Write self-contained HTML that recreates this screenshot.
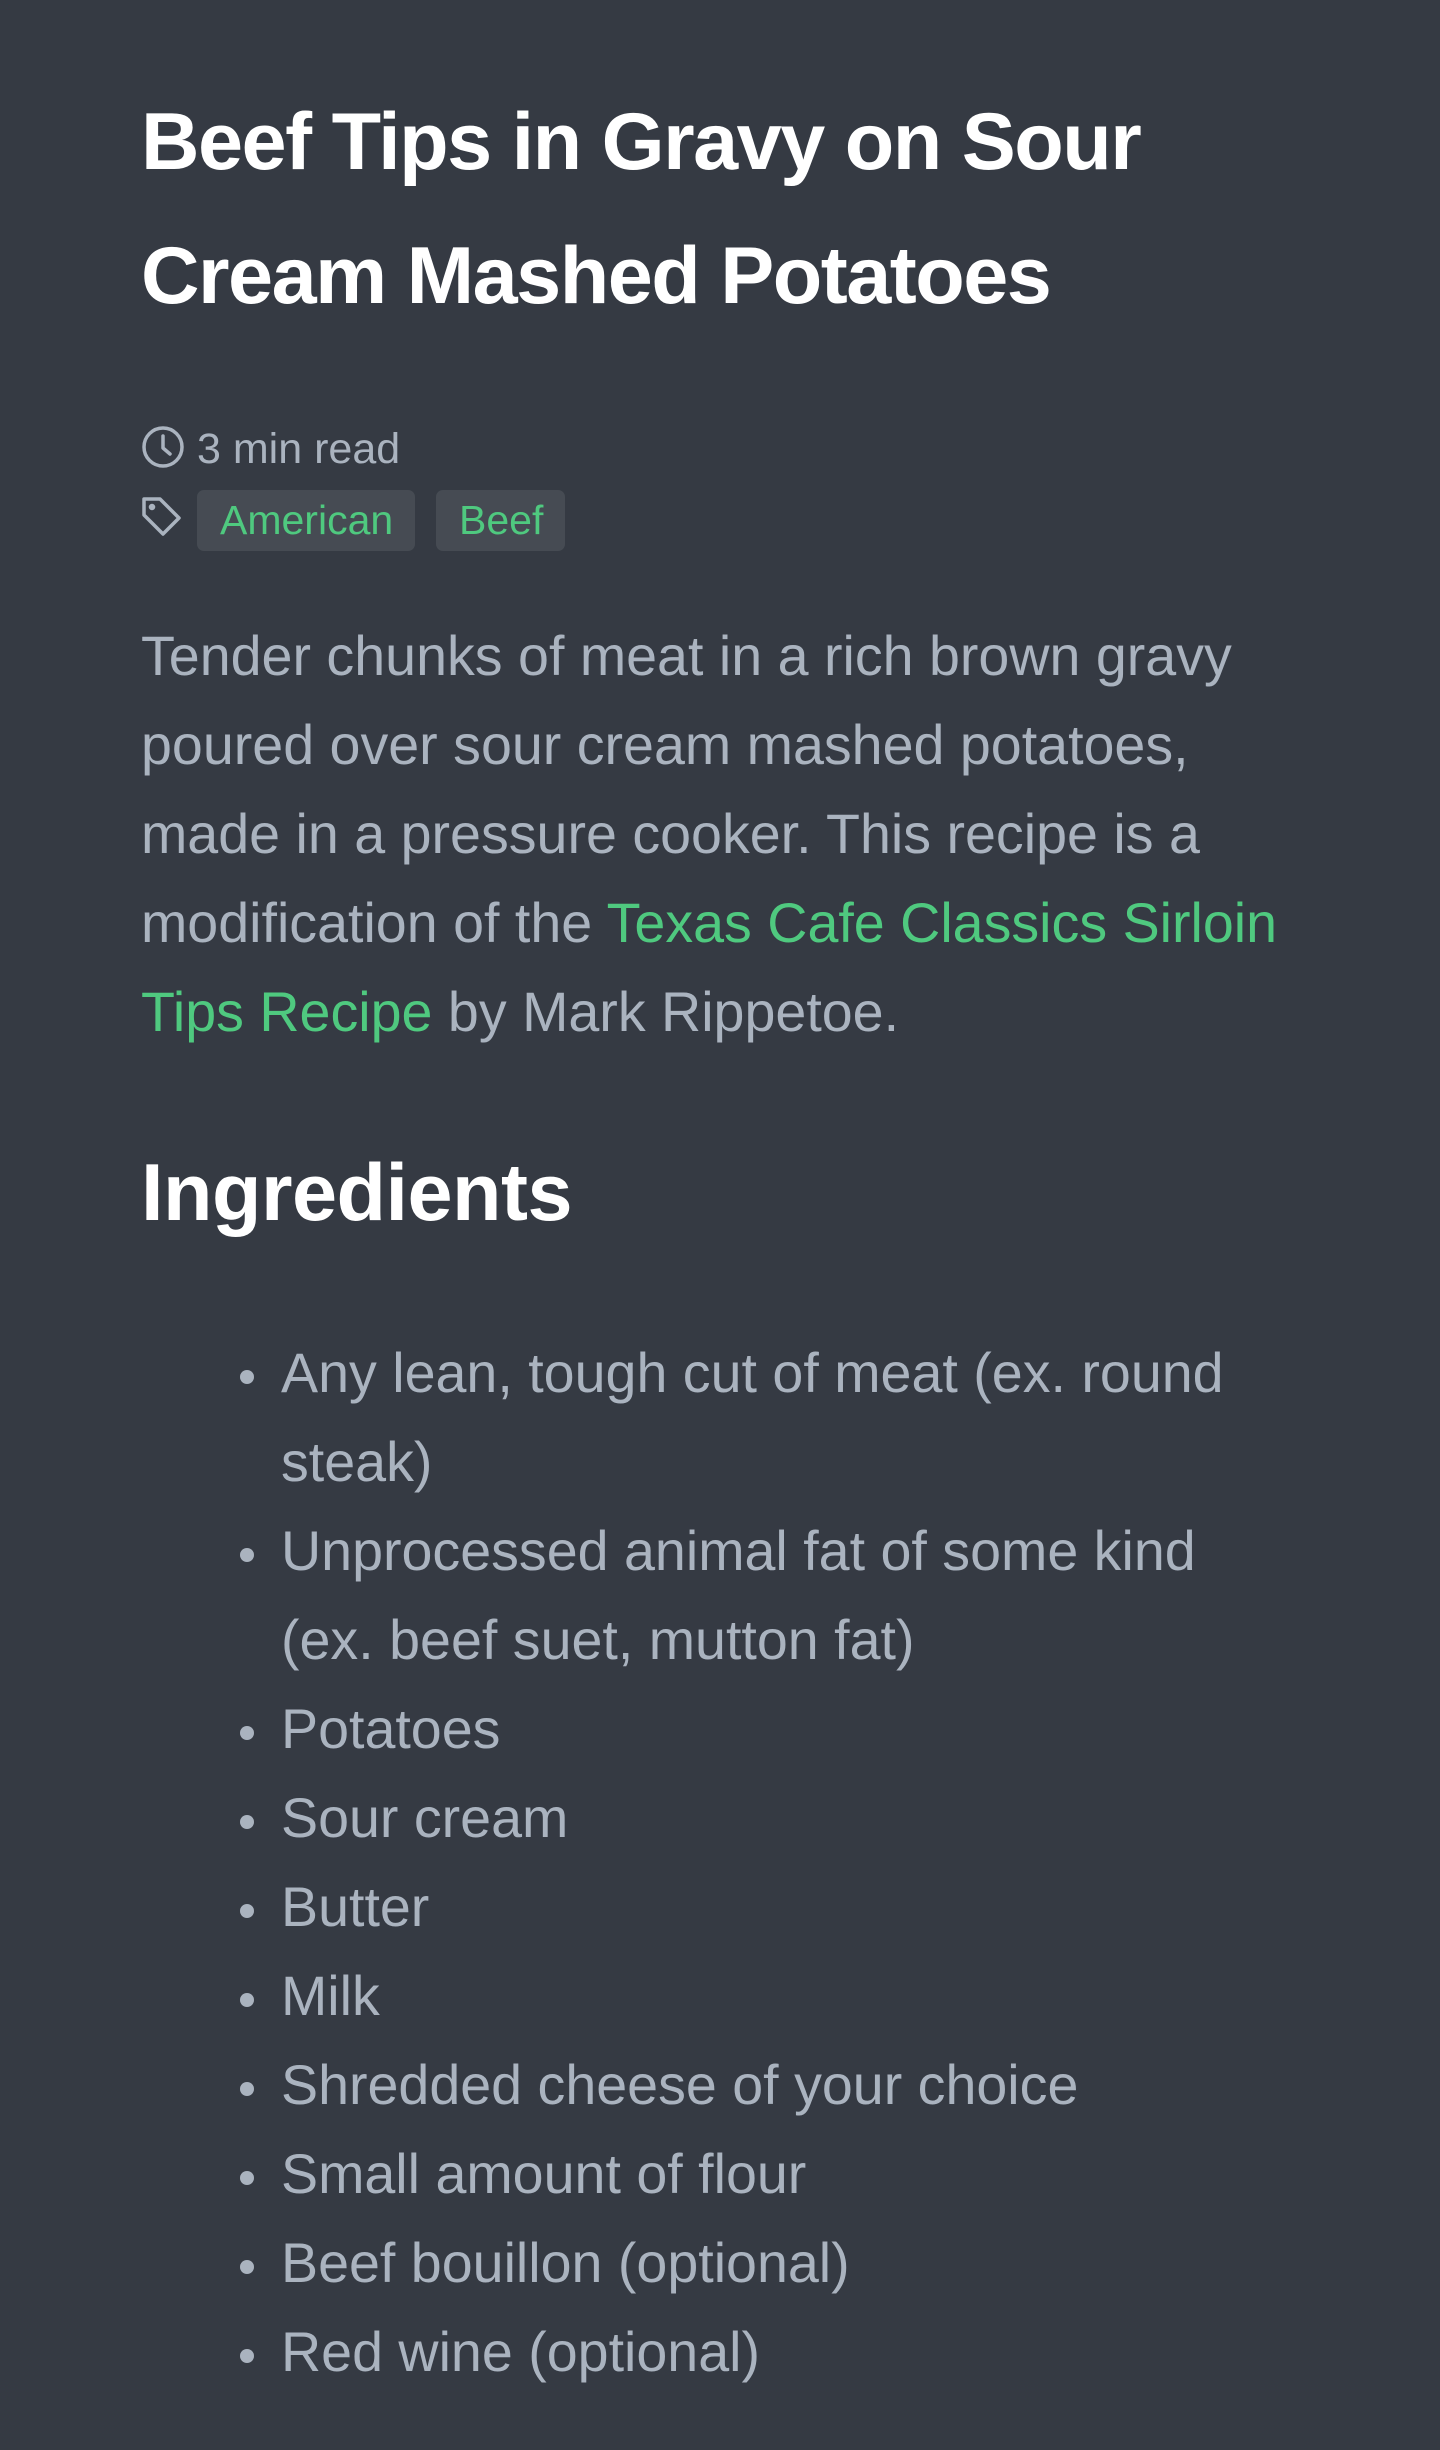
<!DOCTYPE html>
<html><head><meta charset="utf-8"><style>
html,body{margin:0;padding:0}
body{width:1440px;height:2450px;background:#353a43;position:relative;overflow:hidden;font-family:"Liberation Sans",Arial,sans-serif}
.l{position:absolute;white-space:nowrap;line-height:1}
.t{font-weight:bold;color:#fff;font-size:81px;left:141px;letter-spacing:-1.5px}
.b{font-size:55.6px;color:#aab3bf;left:141px}
.li{font-size:55.6px;color:#aab3bf;left:281px}
.g{color:#4fc97f}
.dot{position:absolute;left:240px;width:14px;height:14px;border-radius:50%;background:#aab3bf}
.tag{position:absolute;top:490px;height:61px;background:#464b53;border-radius:7px}
</style></head><body>
<div class="l t" style="top:102px">Beef Tips in Gravy on Sour</div>
<div class="l t" style="top:236px">Cream Mashed Potatoes</div>

<svg style="position:absolute;left:140px;top:424px" width="46" height="46" viewBox="0 0 46 46" fill="none" stroke="#aab3bf" stroke-width="3.5" stroke-linecap="round" stroke-linejoin="round"><circle cx="23" cy="23" r="19"/><path d="M23 12v12l7 6"/></svg>
<div class="l" style="top:428px;left:197px;font-size:43px;color:#aab3bf">3 min read</div>

<svg style="position:absolute;left:140px;top:495px" width="44" height="44" viewBox="0 0 44 44" fill="none" stroke="#aab3bf" stroke-width="3.5" stroke-linejoin="round"><path d="M4 4h16l19 19-16 16L4 20z"/><circle cx="12" cy="12" r="1.5" fill="#aab3bf"/></svg>
<div class="tag" style="left:197px;width:218px"></div>
<div class="tag" style="left:436px;width:129px"></div>
<div class="l g" style="top:500px;left:220px;font-size:41px">American</div>
<div class="l g" style="top:500px;left:459px;font-size:41px">Beef</div>

<div class="l b" style="top:629px">Tender chunks of meat in a rich brown gravy</div>
<div class="l b" style="top:718px">poured over sour cream mashed potatoes,</div>
<div class="l b" style="top:807px">made in a pressure cooker. This recipe is a</div>
<div class="l b" style="top:896px">modification of the <span class="g">Texas Cafe Classics Sirloin</span></div>
<div class="l b" style="top:985px"><span class="g">Tips Recipe</span> by Mark Rippetoe.</div>

<div class="l t" style="top:1153px;letter-spacing:-0.5px">Ingredients</div>

<div class="dot" style="top:1370px"></div><div class="l li" style="top:1346px">Any lean, tough cut of meat (ex. round</div>
<div class="l li" style="top:1435px">steak)</div>
<div class="dot" style="top:1548px"></div><div class="l li" style="top:1524px">Unprocessed animal fat of some kind</div>
<div class="l li" style="top:1613px">(ex. beef suet, mutton fat)</div>
<div class="dot" style="top:1726px"></div><div class="l li" style="top:1702px">Potatoes</div>
<div class="dot" style="top:1815px"></div><div class="l li" style="top:1791px">Sour cream</div>
<div class="dot" style="top:1904px"></div><div class="l li" style="top:1880px">Butter</div>
<div class="dot" style="top:1993px"></div><div class="l li" style="top:1969px">Milk</div>
<div class="dot" style="top:2082px"></div><div class="l li" style="top:2058px">Shredded cheese of your choice</div>
<div class="dot" style="top:2171px"></div><div class="l li" style="top:2147px">Small amount of flour</div>
<div class="dot" style="top:2260px"></div><div class="l li" style="top:2236px">Beef bouillon (optional)</div>
<div class="dot" style="top:2349px"></div><div class="l li" style="top:2325px">Red wine (optional)</div>
</body></html>
